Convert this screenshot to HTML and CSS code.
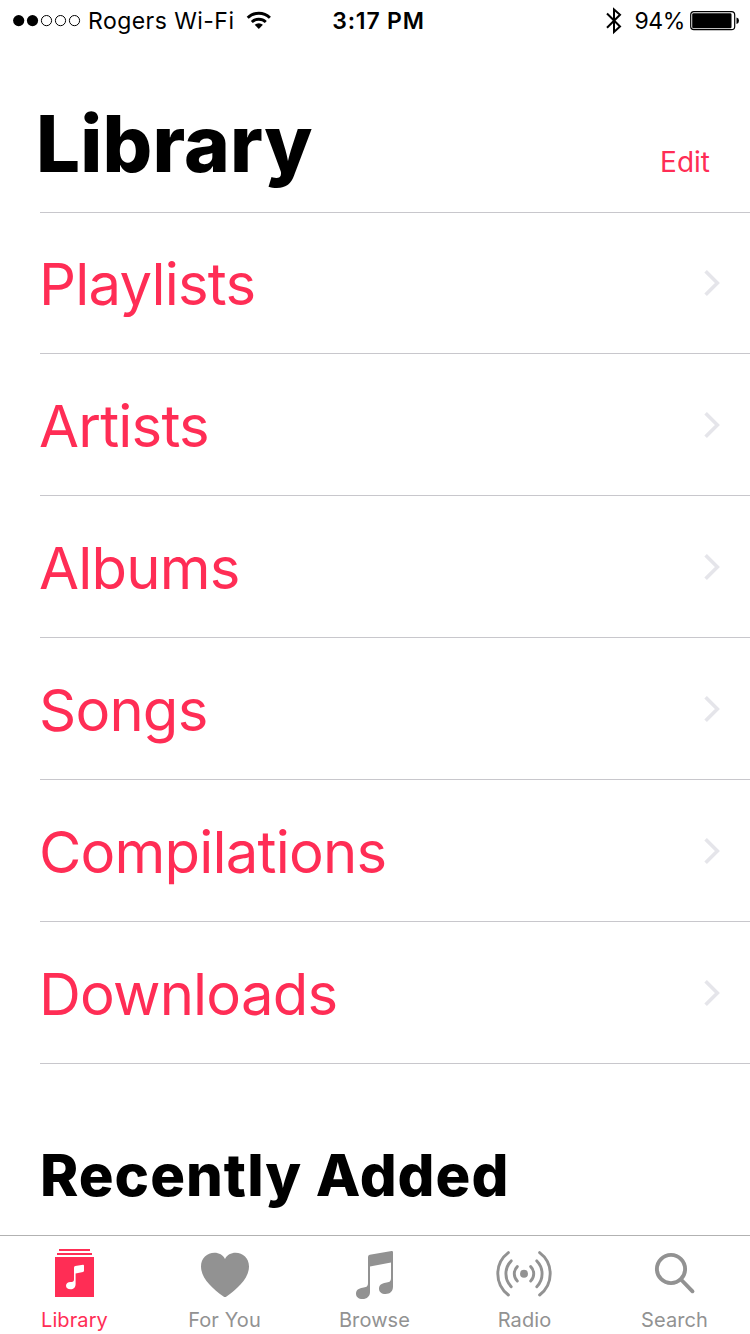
FILE: index.html
```
<!DOCTYPE html>
<html lang="en">
<head>
    <meta charset="UTF-8">
    <meta name="viewport" content="width=device-width, initial-scale=1.0">
    <title>Library</title>
    <link rel="stylesheet" href="styles.css">
</head>
<body>
    <div class="status-bar">
        <div class="status-left">
            <svg class="signal" width="68" height="12" viewBox="0 0 68 12">
                <circle cx="5.7" cy="5.6" r="5.6"/>
                <circle cx="19.5" cy="5.6" r="5.6"/>
                <circle class="empty" cx="33.5" cy="5.6" r="5.1"/>
                <circle class="empty" cx="47.5" cy="5.6" r="5.1"/>
                <circle class="empty" cx="61.5" cy="5.6" r="5.1"/>
            </svg>
            <span class="carrier">Rogers Wi-Fi</span>
            <svg class="wifi" width="26" height="20" viewBox="0 0 26 20">
                <path class="arc" d="M1.7 6.7A15.9 15.9 0 0 1 23.9 6.7"/>
                <path class="arc" d="M5.8 11A10.3 10.3 0 0 1 19.8 11"/>
                <path d="M8.7 13.8A6 6 0 0 1 16.9 13.8L12.8 18Z"/>
            </svg>
        </div>
        <div class="time">3:17 PM</div>
        <div class="status-right">
            <svg class="bluetooth" width="16" height="28" viewBox="0 0 16 28">
                <path d="M1 6.5L14 19.5L8 25V2.5L14 7.7L1 20.7"/>
            </svg>
            <span class="percent">94%</span>
            <svg class="battery" width="50" height="20" viewBox="0 0 50 20">
                <rect class="case" x="0.7" y="0.7" width="44" height="18" rx="3.2"/>
                <rect x="2.2" y="2.2" width="39.3" height="15" rx="1.3"/>
                <path d="M46.5 6.5Q49 7 49 9.7Q49 12.4 46.5 12.9Z"/>
            </svg>
        </div>
    </div>

    <header class="header">
        <h1>Library</h1>
        <a class="edit">Edit</a>
    </header>

    <ul class="menu">
        <li><span>Playlists</span><svg class="chevron" width="18" height="28" viewBox="0 0 18 28"><path d="M2.6 2.2L14.4 14L2.6 25.8"/></svg></li>
        <li><span>Artists</span><svg class="chevron" width="18" height="28" viewBox="0 0 18 28"><path d="M2.6 2.2L14.4 14L2.6 25.8"/></svg></li>
        <li><span>Albums</span><svg class="chevron" width="18" height="28" viewBox="0 0 18 28"><path d="M2.6 2.2L14.4 14L2.6 25.8"/></svg></li>
        <li><span>Songs</span><svg class="chevron" width="18" height="28" viewBox="0 0 18 28"><path d="M2.6 2.2L14.4 14L2.6 25.8"/></svg></li>
        <li><span>Compilations</span><svg class="chevron" width="18" height="28" viewBox="0 0 18 28"><path d="M2.6 2.2L14.4 14L2.6 25.8"/></svg></li>
        <li><span>Downloads</span><svg class="chevron" width="18" height="28" viewBox="0 0 18 28"><path d="M2.6 2.2L14.4 14L2.6 25.8"/></svg></li>
    </ul>

    <section class="recent">
        <h2>Recently Added</h2>
    </section>

    <nav class="tab-bar">
        <a class="tab active">
            <svg width="60" height="56" viewBox="0 0 60 56">
                <path d="M15 5H46V7H15ZM13 9H48V11H13ZM11 13H50V53H11Z"/>
                <path class="note" d="M30 23.7Q30 22.3 31.3 22.1L39 20.8Q40 20.7 40 21.7V26.8Q40 27.8 39 28L31.6 29.6V40C31.6 43.5 29.5 45.3 26.5 45.3C23.8 45.3 22 43.8 22 41.8C22 39.4 23.8 38.3 26.5 38.1C28.8 37.9 30 37.6 30 35.5Z"/>
            </svg>
            <span>Library</span>
        </a>
        <a class="tab">
            <svg width="60" height="56" viewBox="0 0 60 56">
                <path d="M31 15C29 11 25 8.8 20.5 8.8C13 8.8 7 14.2 7 22.5C7 34 18 44.5 29.5 52.4Q31 53.4 32.5 52.4C44 44.5 55 34 55 22.5C55 14.2 49 8.8 41.5 8.8C37 8.8 33 11 31 15Z"/>
            </svg>
            <span>For You</span>
        </a>
        <a class="tab">
            <svg width="60" height="56" viewBox="0 0 60 56">
                <path d="M24 13Q24 11.2 25.8 10.8L47.6 7Q49 6.8 49 8.2V42.5C49 47.3 46 50 41.5 50C37.5 50 35 47.8 35 44.7C35 41 37.8 39.2 41.5 38.7C45 38.2 47 38 47 34V18.4L26 22.5V48C26 52.3 23 55 18.5 55C14.5 55 12 52.8 12 49.7C12 46 14.8 44.2 18.5 43.7C22 43.2 24 43 24 39Z"/>
            </svg>
            <span>Browse</span>
        </a>
        <a class="tab">
            <svg class="radio" width="60" height="56" viewBox="0 0 60 56">
                <circle cx="30" cy="29.8" r="4"/>
                <path class="wave" d="M23.3 22.6A10.1 10.1 0 0 0 23.3 37M36.7 22.6A10.1 10.1 0 0 1 36.7 37"/>
                <path class="wave" d="M17.2 16.9A18.4 18.4 0 0 0 17.2 42.7M42.8 16.9A18.4 18.4 0 0 1 42.8 42.7"/>
                <path class="wave" d="M14.4 8.6A26.5 26.5 0 0 0 14.4 51M45.6 8.6A26.5 26.5 0 0 1 45.6 51"/>
            </svg>
            <span>Radio</span>
        </a>
        <a class="tab">
            <svg class="search" width="60" height="56" viewBox="0 0 60 56">
                <circle cx="27" cy="25" r="14.1"/>
                <path d="M37 35.5L48.5 47.3"/>
            </svg>
            <span>Search</span>
        </a>
    </nav>
</body>
</html>
```

FILE: styles.css
```
* {
    box-sizing: border-box;
}
body {
    display: flex;
    flex-direction: column;
    width: 750px;
    height: 1334px;
    margin: 0;
    overflow: hidden;
    background: #fff;
    color: #000;
    font-family: Inter, "Liberation Sans", sans-serif;
}
h1, h2, ul {
    margin: 0;
    padding: 0;
}

/* status bar */
.status-bar {
    display: grid;
    grid-template-columns: 1fr auto 1fr;
    align-items: center;
    height: 41px;
    padding: 0 10px 0 13px;
    font-size: 23px;
    line-height: 28px;
}
.status-left, .status-right {
    display: flex;
    align-items: center;
}
.status-right {
    justify-content: flex-end;
}
.signal {
    margin-right: 7px;
}
.signal .empty {
    fill: none;
    stroke: #000;
    stroke-width: 1;
}
.carrier {
    letter-spacing: 0.45px;
}
.wifi {
    margin-left: 12px;
}
.wifi .arc {
    fill: none;
    stroke: #000;
    stroke-width: 2.9;
}
.time {
    padding-left: 4px;
    font-weight: 600;
    letter-spacing: 0.8px;
}
.bluetooth {
    margin-right: 12px;
}
.bluetooth path {
    fill: none;
    stroke: #000;
    stroke-width: 2;
}
.percent {
    letter-spacing: -0.4px;
}
.battery {
    margin-left: 5px;
}
.battery .case {
    fill: none;
    stroke: #000;
    stroke-width: 1.2;
}

/* title */
.header {
    display: flex;
    justify-content: space-between;
    align-items: baseline;
    height: 172px;
    margin-left: 40px;
    padding: 56px 40px 0 0;
    border-bottom: 1px solid #c8c7cc;
}
h1 {
    margin-left: -4px;
    font-size: 78px;
    font-weight: 800;
    line-height: 94px;
    letter-spacing: 0.2px;
}
.edit {
    color: #ff2d55;
    font-size: 28px;
}

/* library list */
.menu {
    margin-left: 40px;
    list-style: none;
}
.menu li {
    display: flex;
    justify-content: space-between;
    align-items: center;
    height: 142px;
    padding-right: 29px;
    border-bottom: 1px solid #c8c7cc;
    color: #ff2d55;
    font-size: 58px;
    letter-spacing: -0.8px;
}
.menu li:first-child {
    height: 141px;
}
.menu span {
    margin-left: -1px;
    padding-top: 2px;
}
.chevron path {
    fill: none;
    stroke: #e5e5ea;
    stroke-width: 3.6;
}
.recent {
    flex: 1;
    padding: 76px 0 0 40px;
}
h2 {
    font-size: 58px;
    font-weight: 800;
    line-height: 70px;
    letter-spacing: 1px;
}

/* bottom tabs */
.tab-bar {
    display: grid;
    grid-template-columns: repeat(5, 150px);
    height: 99px;
    padding-top: 8px;
    border-top: 1px solid #b2b2b2;
    background: #fff;
}
.tab {
    display: flex;
    flex-direction: column;
    align-items: center;
    margin-left: -2px;
    color: #929292;
    font-size: 20px;
    line-height: 24px;
    letter-spacing: 0.1px;
}
.tab span {
    margin: 8px 0 0 1px;
}
.tab svg {
    flex: none;
    fill: currentColor;
}
.tab.active {
    color: #ff2d55;
}
.tab .note {
    fill: #fff;
}
.radio .wave {
    fill: none;
    stroke: currentColor;
    stroke-width: 2.9;
    stroke-linecap: round;
}
.tab .search {
    fill: none;
    stroke: currentColor;
    stroke-width: 3.9;
    stroke-linecap: round;
}
```
